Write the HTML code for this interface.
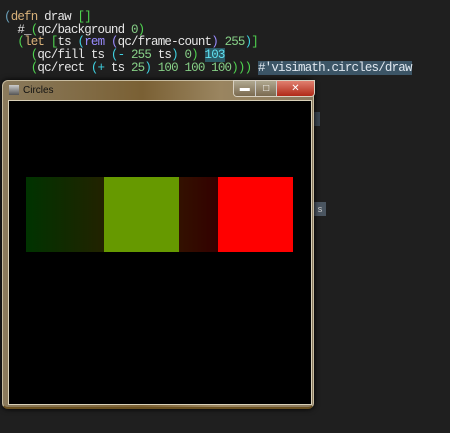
<!DOCTYPE html>
<html><head><style>
body{margin:0;width:450px;height:433px;background:#1f1f1f;overflow:hidden;position:relative;font-family:"Liberation Sans",sans-serif}
.code{position:absolute;left:4px;top:11px;font:12.5px/12.7px "Liberation Mono",monospace;letter-spacing:-0.82px;color:#e6e6e6;white-space:pre}
.k{color:#d9b27a}.g{color:#4fd34f}.n{color:#86cf86}.c{color:#3fd0e0}.p{color:#9a8cff}.b{color:#6a9fb8}
.hl{background:#3c5566;color:#e0e8f0}
.win{position:absolute;left:2px;top:80px;width:310px;height:326px;border-radius:6px;background:linear-gradient(90deg,#8a7a5c,#7a6034 45%,#9a8560 70%,#8a7a60);border:1px solid #c8bca0;border-bottom:2px solid #6a5020;box-shadow:0 0 6px #000}
.client{position:absolute;left:5px;top:19px;width:302px;height:303px;background:#000;border:1px solid #d8d0b8}
.title{position:absolute;left:20px;top:4px;font-size:10px;color:#111}
.ico{position:absolute;left:6px;top:4px;width:10px;height:10px;background:linear-gradient(#ccc,#555)}
.btns{position:absolute;left:230px;top:-1px;width:80px;height:15px;border:1px solid #d8d0c0;border-radius:0 0 4px 4px;overflow:hidden;display:flex}
.bt{height:15px;background:linear-gradient(#b0a890,#7a6a50);border-right:1px solid #ccc;color:#fff;font-size:10px;text-align:center;line-height:15px}
</style></head><body>
<div class="code"><span class="b">(</span><span class="k">defn</span> draw <span class="g">[]</span>
  #_<span class="g">(</span>qc/background <span class="n">0</span><span class="g">)</span>
  <span class="g">(</span><span class="k">let</span> <span class="g">[</span>ts <span class="c">(</span><span class="p">rem</span> <span class="p">(</span>qc/frame-count<span class="p">)</span> <span class="n">255</span><span class="c">)</span><span class="g">]</span>
    <span class="g">(</span>qc/fill ts <span class="c">(-</span> <span class="n">255</span> ts<span class="c">)</span> <span class="n">0</span><span class="g">)</span> <span class="hl" style="color:#5fe0f0;background:#2a5a66">103</span>
    <span class="g">(</span>qc/rect <span class="c">(+</span> ts <span class="n">25</span><span class="c">)</span> <span class="n">100 100 100</span><span class="g">)))</span> <span class="hl">#'visimath.circles/draw</span></div>
<div style="position:absolute;left:314px;top:112px;width:6px;height:14px;background:#3a4550"></div>
<div style="position:absolute;left:314px;top:202px;width:12px;height:14px;background:#4a5560;color:#ccc;font-size:9px;line-height:14px;text-align:center">s</div>
<div class="win">
<div class="ico"></div><div class="title">Circles</div>
<div class="btns"><div class="bt" style="width:22px">▬</div><div class="bt" style="width:20px">□</div><div class="bt" style="width:38px;background:linear-gradient(#e08070,#b02a18);border:0">✕</div></div>
<div class="client">
<div style="position:absolute;left:17px;top:76px;width:78px;height:75px;background:linear-gradient(90deg,#003300,#222200)"></div>
<div style="position:absolute;left:95px;top:76px;width:75px;height:75px;background:#669900"></div>
<div style="position:absolute;left:170px;top:76px;width:39px;height:75px;background:linear-gradient(90deg,#331100,#330000)"></div>
<div style="position:absolute;left:209px;top:76px;width:75px;height:75px;background:#ff0000"></div>
</div></div>
</body></html>
